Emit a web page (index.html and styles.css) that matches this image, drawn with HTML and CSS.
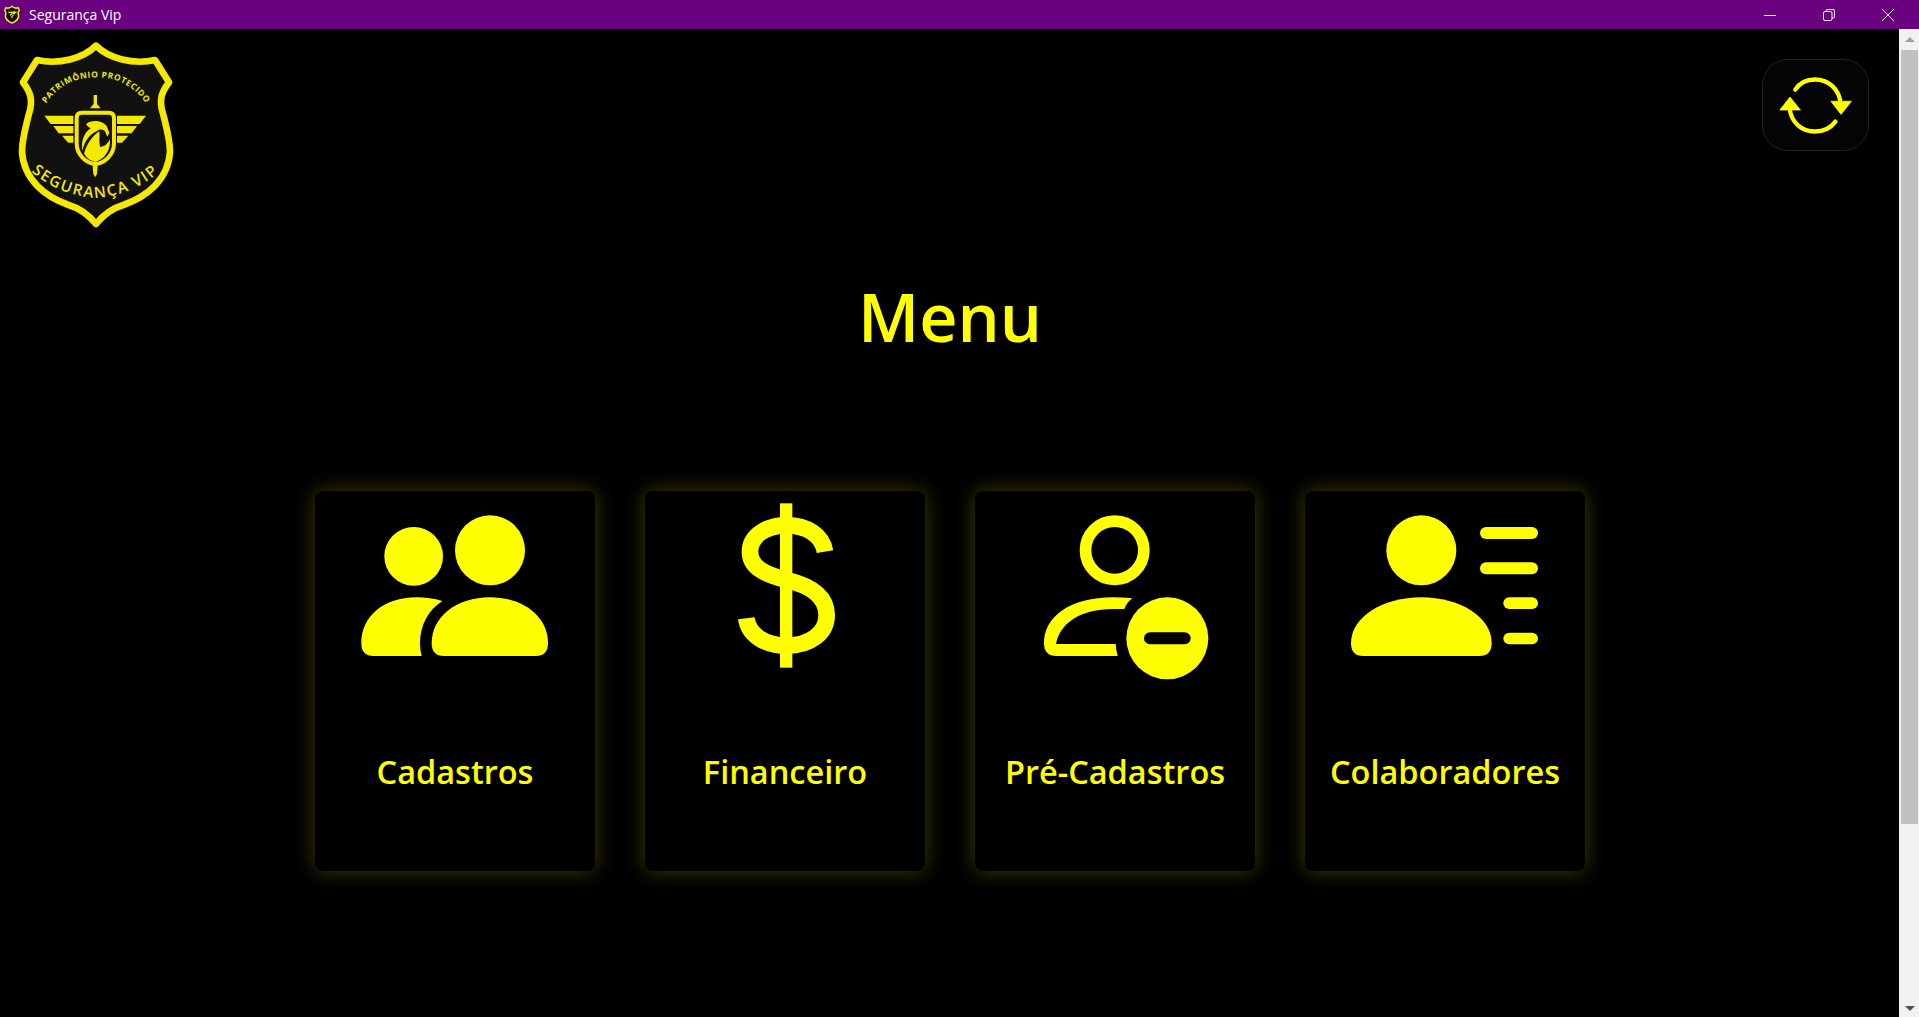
FILE: index.html
```html
<!DOCTYPE html>
<html lang="pt-BR">
<head>
<meta charset="utf-8">
<title>Segurança Vip</title>
<link rel="stylesheet" href="styles.css">
</head>
<body>
<div class="window">
  <header class="titlebar">
    <svg class="app-icon" viewBox="10 10 52 62" aria-hidden="true">
      <path class="app-shield" d="M36 14 C42 20 50 21 56 19 L60 28 C56 32 55 36 57 42 C60 54 52 62 36 69 C20 62 12 54 15 42 C17 36 16 32 12 28 L16 19 C22 21 30 20 36 14 Z"/>
      <path class="app-mark" d="M24 34 H48 L40 40 M30 44 L44 30 M34 52 L40 42"/>
    </svg>
    <span class="app-name">Segurança Vip</span>
    <div class="window-controls">
      <svg class="win-btn" viewBox="0 0 12 12"><path d="M0 6.5 H12"/></svg>
      <svg class="win-btn" viewBox="0 0 12 12"><rect x="0.5" y="2.5" width="8.5" height="9" rx="1.5"/><path d="M3 2.5 V2 Q3 0.5 4.5 0.5 H10 Q11.5 0.5 11.5 2 V7.5 Q11.5 9 10 9 H9"/></svg>
      <svg class="win-btn" viewBox="0 0 12 12"><path d="M0 0 L12 12 M12 0 L0 12"/></svg>
    </div>
  </header>

  <div class="content">
    <main class="main">
      <div class="top-row">
        <svg class="logo" viewBox="45 105 510 600" role="img" aria-label="Segurança Vip">
          <path class="shield" d="M288 137 C325 175 400 195 465 180 L507 247 C485 275 475 300 490 345 C500 385 510 420 510 455 C505 540 440 590 370 615 C335 625 310 645 288 672 C266 645 240 625 206 615 C136 590 71 540 66 455 C66 420 76 385 86 345 C101 300 91 275 69 247 L111 180 C176 195 251 175 288 137 Z"/>
          <defs>
            <path id="arc-top" d="M125 330 C170 255 225 232 288 232 C350 232 405 255 452 330"/>
            <path id="arc-bottom" d="M100 520 C160 570 230 590 288 594 C350 590 420 565 472 520"/>
          </defs>
          <text class="logo-text-top"><textPath href="#arc-top" startOffset="50%">PATRIMÔNIO PROTECIDO</textPath></text>
          <text class="logo-text-bottom"><textPath href="#arc-bottom" startOffset="50%">SEGURANÇA VIP</textPath></text>
          <g class="emblem">
            <path d="M133 347 H220 V372 H152 Z M160 378 H220 V400 H176 Z M186 407 H220 V428 H205 Z"/>
            <path d="M438 347 H351 V372 H419 Z M411 378 H351 V400 H395 Z M385 407 H351 V428 H366 Z"/>
            <path d="M281 285 H291 V312 L302 325 H270 L281 312 Z"/>
            <path d="M278 495 H293 L291 522 L285 532 L280 522 Z"/>
          </g>
          <path class="crest" d="M245 338 H326 Q342 338 342 354 V430 C342 465 315 488 286 492 C257 488 230 465 230 430 V354 Q230 338 245 338 Z"/>
          <path class="emblem" d="M258 372 C272 360 305 358 320 378 L328 398 L322 410 L314 392 C305 386 298 388 292 392 C270 402 255 420 247 452 C243 425 250 400 272 385 C266 382 262 378 258 372 Z"/>
          <path class="emblem" d="M298 394 C300 410 296 425 300 440 C312 442 322 432 330 418 C332 450 315 478 286 486 C268 482 258 472 252 460 C262 430 275 410 298 394 Z"/>
        </svg>
        <button class="refresh" type="button" aria-label="Atualizar">
          <svg class="refresh-icon" viewBox="127 178 319 273">
            <path class="refresh-arc" d="M225 268 C240 245 262 237 285 237 C325 237 358 265 363 310"/>
            <path class="refresh-arc" d="M347 365 C332 385 310 395 285 395 C245 395 213 368 208 325"/>
            <path class="refresh-head" d="M333 303 H396 L364 343 Z M178 330 H241 L209 290 Z"/>
          </svg>
        </button>
      </div>

      <h1 class="page-title">Menu</h1>

      <div class="cards">
        <a class="card" href="#">
          <svg class="card-icon" viewBox="45 63 840 600" aria-hidden="true">
            <circle cx="570" cy="241" r="105"/>
            <circle cx="341" cy="259" r="88"/>
            <path d="M432 558 Q395 558 395 520 C395 440 470 382 570 382 S744 440 744 520 Q744 558 707 558 Z"/>
            <path d="M221 558 Q184 558 184 520 C184 440 250 382 350 382 Q390 382 427 393 C385 420 360 465 360 520 Q360 540 365 558 Z"/>
          </svg>
          <span class="card-label">Cadastros</span>
        </a>
        <a class="card" href="#">
          <svg class="card-icon" viewBox="15 63 840 600" aria-hidden="true">
            <rect x="420" y="100" width="37" height="493"/>
            <path class="dollar" d="M555 245 C547 195 500 166 440 166 C375 166 330 200 330 245 C330 290 370 312 440 330 C515 348 560 380 560 435 C560 490 510 527 440 527 C375 527 325 495 319 445"/>
          </svg>
          <span class="card-label">Financeiro</span>
        </a>
        <a class="card" href="#">
          <svg class="card-icon" viewBox="15 63 840 600" aria-hidden="true">
            <circle class="ring" cx="434" cy="241" r="87.5"/>
            <path d="M443 558 H260 Q222 558 222 520 C222 440 300 382 430 382 Q460 382 487 385 Q470 398 463 417 Q445 417 430 417 C330 417 270 460 258 522 H437 Q438 540 443 558 Z"/>
            <circle cx="592" cy="505" r="123"/>
            <rect class="minus" x="522" y="487" width="140" height="36" rx="18"/>
          </svg>
          <span class="card-label">Pré-Cadastros</span>
        </a>
        <a class="card" href="#">
          <svg class="card-icon" viewBox="15 63 840 600" aria-hidden="true">
            <circle cx="364" cy="241" r="105"/>
            <path d="M190 558 Q153 558 153 520 C153 440 250 382 364 382 S575 440 575 520 Q575 558 538 558 Z"/>
            <rect x="540" y="171" width="174" height="36" rx="18"/>
            <rect x="540" y="277" width="174" height="36" rx="18"/>
            <rect x="610" y="382" width="104" height="35" rx="17.5"/>
            <rect x="610" y="488" width="104" height="35" rx="17.5"/>
          </svg>
          <span class="card-label">Colaboradores</span>
        </a>
      </div>
    </main>

    <aside class="scrollbar" aria-hidden="true">
      <div class="scroll-btn"><span class="arrow-up"></span></div>
      <div class="scroll-thumb"></div>
      <div class="scroll-btn-down"><span class="arrow-down"></span></div>
    </aside>
  </div>
</div>
</body>
</html>
```

FILE: styles.css
```css
* { box-sizing: border-box; }

html, body {
  margin: 0;
  height: 100%;
  background: #000;
  overflow: hidden;
}

body { font-family: "Open Sans", "Noto Sans", "Liberation Sans", sans-serif; }

.window {
  display: flex;
  flex-direction: column;
  height: 100vh;
}

/* Title bar */
.titlebar {
  display: flex;
  align-items: center;
  flex: 0 0 29px;
  background: #6a007f;
  color: #fff;
  padding-left: 4px;
}

.app-icon { width: 16px; height: 19px; }
.app-shield { fill: #111; stroke: #f5e900; stroke-width: 5; }
.app-mark { fill: none; stroke: #f5e900; stroke-width: 4; }

.app-name {
  margin-left: 9px;
  font-size: 14px;
  line-height: 29px;
}

.window-controls {
  display: flex;
  gap: 47px;
  margin-left: auto;
  margin-right: 25px;
}

.win-btn {
  width: 12px;
  height: 12px;
  fill: none;
  stroke: #fff;
  stroke-width: 1;
}

/* Layout */
.content {
  display: flex;
  flex: 1;
  min-height: 0;
}

.main {
  flex: 1;
  min-width: 0;
  padding: 6px 0 0 1px;
  background: #000;
}

.top-row {
  display: flex;
  justify-content: space-between;
  align-items: flex-start;
  padding-left: 14px;
}

/* Logo */
.logo { display: block; width: 170px; height: 200px; }
.shield { fill: #111; stroke: #f5e900; stroke-width: 20; stroke-linejoin: round; }
.emblem { fill: #f5e900; }
.crest { fill: #111; stroke: #f5e900; stroke-width: 12; }

.logo-text-top,
.logo-text-bottom {
  fill: #f5e900;
  font-family: "Open Sans", "Noto Sans", sans-serif;
  font-weight: 700;
  text-anchor: middle;
}

.logo-text-top { font-size: 25px; letter-spacing: 2px; }
.logo-text-bottom { font-size: 46px; letter-spacing: 5px; font-weight: 600; }

/* Refresh */
.refresh {
  width: 107px;
  height: 92px;
  margin: 24px 30px 0 0;
  padding: 0;
  background: #040404;
  border: 1px solid #222;
  border-radius: 26px;
  overflow: hidden;
}

.refresh-icon { display: block; width: 105px; height: 90px; }
.refresh-arc { fill: none; stroke: #ff0; stroke-width: 13; stroke-linecap: round; }
.refresh-head { fill: #ff0; stroke: #ff0; stroke-width: 2; stroke-linejoin: round; }

/* Title */
.page-title {
  margin: 41px 0 135px;
  color: #ff0;
  font-size: 66.5px;
  font-weight: 600;
  line-height: 80px;
  text-align: center;
}

/* Cards */
.cards {
  display: flex;
  justify-content: center;
  gap: 50px;
}

.card {
  display: flex;
  flex-direction: column;
  align-items: center;
  width: 280px;
  height: 380px;
  background: #000;
  border-radius: 8px;
  box-shadow: 0 0 20px rgba(255, 255, 0, 0.25);
  color: #ff0;
  text-decoration: none;
}

.card-icon {
  display: block;
  width: 280px;
  height: 200px;
  flex: none;
  fill: #ff0;
}

.card-icon .ring { fill: none; stroke: #ff0; stroke-width: 35; }
.card-icon .minus { fill: #000; }
.card-icon .dollar { fill: none; stroke: #ff0; stroke-width: 50; }

.card-label {
  margin-top: 59px;
  font-size: 32.5px;
  font-weight: 600;
  line-height: 44px;
}

/* Scrollbar */
.scrollbar {
  display: flex;
  flex-direction: column;
  flex: 0 0 20px;
  background: #f1f1f1;
}

.scroll-btn {
  display: flex;
  justify-content: center;
  align-items: center;
  height: 21px;
  padding-left: 2px;
}

.scroll-btn-down {
  display: flex;
  justify-content: center;
  align-items: center;
  height: 17px;
  margin-top: auto;
  padding-left: 2px;
}

.arrow-up,
.arrow-down {
  width: 0;
  height: 0;
  border-left: 5px solid transparent;
  border-right: 5px solid transparent;
}

.arrow-up { border-bottom: 5px solid #a3a3a3; }
.arrow-down { border-top: 5px solid #505050; }

.scroll-thumb {
  height: 774px;
  margin: 0 1px 0 2px;
  background: #c1c1c1;
}
```
